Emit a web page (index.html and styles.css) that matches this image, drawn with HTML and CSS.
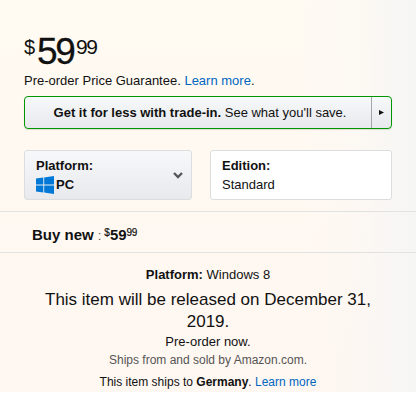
FILE: index.html
```html
<!DOCTYPE html>
<html lang="en">
<head>
<meta charset="utf-8">
<title>Purchase options</title>
<link rel="stylesheet" href="styles.css">
</head>
<body>
<main class="panel">
  <div class="price"><span class="currency">$</span><span class="whole">59</span><span class="cents">99</span></div>
  <p class="guarantee">Pre-order Price Guarantee. <a class="link">Learn more</a>.</p>
  <div class="trade">
    <div class="trade-text"><span><b>Get it for less with trade-in.</b> See what you'll save.</span></div>
    <div class="trade-arrow"><svg width="5" height="5" viewBox="0 0 5 5"><path d="M0 0L5 2.5L0 5Z" fill="#111"/></svg></div>
  </div>
  <div class="options">
    <div class="option platform">
      <div>
        <b class="label">Platform:</b>
        <div class="value"><svg width="18" height="18" viewBox="0 0 18 18" fill="#0078d7"><path d="M0 2.6L7.3 1.6V8.5H0ZM8.2 1.4L18 0V8.5H8.2ZM0 9.4H7.3V16.4L0 15.4ZM8.2 9.4H18V18L8.2 16.6Z"/></svg><b>PC</b></div>
      </div>
      <svg class="chevron" width="10" height="7" viewBox="0 0 10 7"><path d="M1 1L5 5L9 1" fill="none" stroke="#555" stroke-width="2.3"/></svg>
    </div>
    <div class="option edition">
      <div><b class="label">Edition:</b><div class="value">Standard</div></div>
    </div>
  </div>
  <div class="buy"><b class="buy-title">Buy new</b><span class="colon">:</span><span class="small-sign">$</span><b class="buy-whole">59</b><span class="small-cents">99</span></div>
  <section class="details">
    <p class="system"><b>Platform:</b> Windows 8</p>
    <p class="release">This item will be released on December 31, 2019.</p>
    <p class="preorder">Pre-order now.</p>
    <p class="seller">Ships from and sold by Amazon.com.</p>
    <p class="shipping">This item ships to <b>Germany</b>. <a class="link">Learn more</a></p>
  </section>
</main>
</body>
</html>
```
FILE: styles.css
```css
* { box-sizing: border-box; }
body {
  margin: 0;
  background: #fff;
  color: #111;
  font: 13px/19px "Liberation Sans", Arial, sans-serif;
}
p { margin: 0; }
svg { display: block; }
.panel {
  height: 392px;
  padding-top: 36px;
  overflow: hidden;
  background:
    linear-gradient(90deg, transparent 300px, rgba(246, 246, 245, .3) 360px, #f6f6f5 412px),
    linear-gradient(#fffaf2, #fff7f1);
}
.link { color: #0066c0; }
.price { display: flex; height: 35px; padding-left: 24px; }
.currency { width: 13px; font-size: 20px; line-height: 22px; }
.whole { width: 39px; font-size: 37px; line-height: 32px; letter-spacing: -2.3px; -webkit-text-stroke: .3px #111; }
.cents { font-size: 21px; line-height: 22px; letter-spacing: -1.5px; }
.guarantee { padding-left: 24px; }
.trade {
  display: flex;
  width: 368px;
  height: 33px;
  margin: 6px 0 0 24px;
  border: 1px solid #009600;
  border-radius: 4px;
  background: linear-gradient(#f7f8fa, #e7e9ec);
  box-shadow: 0 1px 1px rgba(0, 0, 0, .12);
}
.trade-text { flex: 1; display: flex; align-items: center; justify-content: center; padding-left: 4px; }
.trade-arrow { display: flex; width: 20px; align-items: center; justify-content: center; border-left: 1px solid #a2a6ac; }
.options { display: flex; gap: 18px; padding: 21px 24px 0; }
.option { height: 50px; padding: 5px 11px; border: 1px solid #dcdddf; border-radius: 3px; }
.platform { display: flex; width: 168px; align-items: center; justify-content: space-between; padding-right: 8px; background: linear-gradient(#f7f8fa, #e7e9ec); }
.edition { width: 182px; background: #fff; }
.label { display: block; }
.value { display: flex; align-items: center; gap: 2px; height: 19px; }
.buy {
  display: flex;
  height: 42px;
  margin-top: 11px;
  padding: 13px 0 0 32px;
  border: solid #e1e2e2;
  border-width: 1px 0;
}
.buy-title { font-size: 15px; }
.colon { padding: 1px 3px 0 4px; color: #555; }
.small-sign, .small-cents { font-size: 10px; line-height: 15px; -webkit-text-stroke: .2px #111; }
.small-cents { letter-spacing: -.4px; }
.buy-whole { font-size: 15px; }
.details { padding: 12px 0 0; text-align: center; }
.release { width: 368px; margin: 5px auto 0; font-size: 17px; line-height: 22px; }
.preorder { line-height: 18px; }
.seller { color: #555; font-size: 12px; line-height: 18px; }
.shipping { margin-top: 4px; font-size: 12px; line-height: 18px; }
```
